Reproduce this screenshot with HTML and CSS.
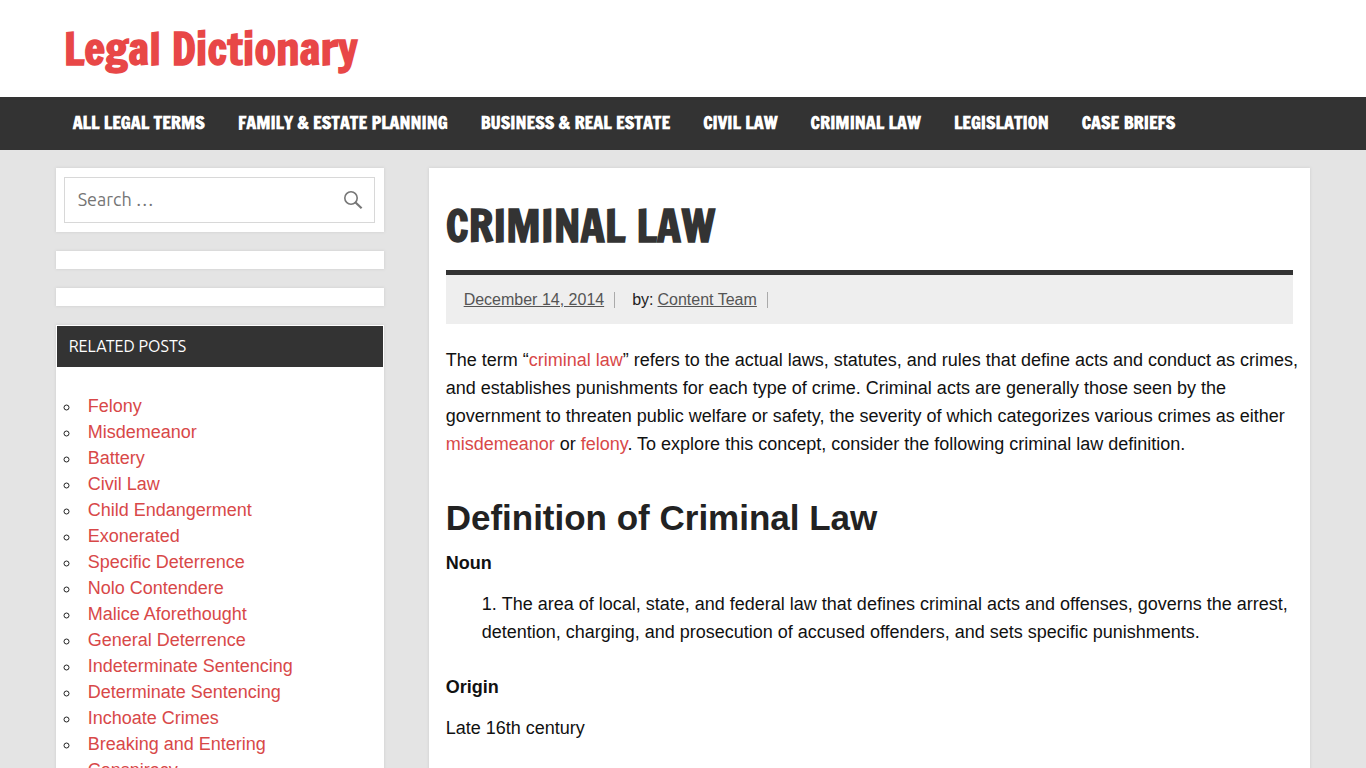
FILE: index.html
```html
<!DOCTYPE html>
<html lang="en-US">
<head>
  <meta charset="UTF-8">
  <meta name="viewport" content="width=device-width, initial-scale=1">
  <title>Criminal Law - Legal Dictionary</title>
  <link rel="stylesheet" href="styles.css">
</head>
<body>
  <header class="site-header">
    <div class="container">
      <p class="site-title"><a href="#">Legal Dictionary</a></p>
    </div>
  </header>

  <nav class="main-nav">
    <ul class="container menu">
      <li><a href="#">All Legal Terms</a></li>
      <li><a href="#">Family &amp; Estate Planning</a></li>
      <li><a href="#">Business &amp; Real Estate</a></li>
      <li><a href="#">Civil Law</a></li>
      <li><a href="#">Criminal Law</a></li>
      <li><a href="#">Legislation</a></li>
      <li><a href="#">Case Briefs</a></li>
    </ul>
  </nav>

  <div class="container wrap">
    <aside class="sidebar">
      <div class="widget widget-search">
        <form class="search-form" role="search">
          <input type="search" class="search-field" placeholder="Search …" aria-label="Search for:">
          <button type="submit" class="search-submit" aria-label="Search">
            <svg width="20" height="20" viewBox="0 0 20 20" fill="none" stroke="#777">
              <circle cx="8" cy="8" r="6.2" stroke-width="1.6"/>
              <path d="M12.3 12.3L18.6 18.2" stroke-width="2.2"/>
            </svg>
          </button>
        </form>
      </div>
      <div class="widget"></div>
      <div class="widget"></div>
      <div class="widget widget-related">
        <h3 class="widget-title">Related Posts</h3>
        <ul class="related">
          <li><a href="#">Felony</a></li>
          <li><a href="#">Misdemeanor</a></li>
          <li><a href="#">Battery</a></li>
          <li><a href="#">Civil Law</a></li>
          <li><a href="#">Child Endangerment</a></li>
          <li><a href="#">Exonerated</a></li>
          <li><a href="#">Specific Deterrence</a></li>
          <li><a href="#">Nolo Contendere</a></li>
          <li><a href="#">Malice Aforethought</a></li>
          <li><a href="#">General Deterrence</a></li>
          <li><a href="#">Indeterminate Sentencing</a></li>
          <li><a href="#">Determinate Sentencing</a></li>
          <li><a href="#">Inchoate Crimes</a></li>
          <li><a href="#">Breaking and Entering</a></li>
          <li><a href="#">Conspiracy</a></li>
        </ul>
      </div>
    </aside>

    <main class="content">
      <article>
        <h1 class="entry-title">Criminal Law</h1>
        <div class="entry-meta">
          <span class="meta-item"><a href="#">December 14, 2014</a></span>
          <span class="meta-item">by: <a href="#">Content Team</a></span>
        </div>
        <div class="entry">
          <p>The term “<a href="#">criminal law</a>” refers to the actual laws, statutes, and rules that define acts and conduct as crimes, and establishes punishments for each type of crime. Criminal acts are generally those seen by the government to threaten public welfare or safety, the severity of which categorizes various crimes as either <a href="#">misdemeanor</a> or <a href="#">felony</a>. To explore this concept, consider the following criminal law definition.</p>
          <h2>Definition of Criminal Law</h2>
          <p><strong>Noun</strong></p>
          <ol>
            <li>The area of local, state, and federal law that defines criminal acts and offenses, governs the arrest, detention, charging, and prosecution of accused offenders, and sets specific punishments.</li>
          </ol>
          <p><strong>Origin</strong></p>
          <p>Late 16th century</p>
        </div>
      </article>
    </main>
  </div>
</body>
</html>
```
FILE: styles.css
```css
* {
  box-sizing: border-box;
}
body {
  margin: 0;
  background: #e4e4e4;
  color: #222;
  font-family: Arial, "Liberation Sans", sans-serif;
  font-size: 18px;
  line-height: 28px;
}
a {
  color: #d84848;
  text-decoration: none;
}
.container {
  width: 92%;
  margin: 0 auto;
}

/* header */
.site-header {
  background: #fff;
}
.site-title {
  margin: 0;
  padding: 16px 9px 17px;
  font-family: "Francois One", "Liberation Sans Narrow", "Arial Narrow", sans-serif;
  font-size: 44px;
  font-weight: bold;
  line-height: 64px;
}
.site-title a {
  color: #e84747;
}

/* navigation */
.main-nav {
  background: #333;
}
.menu {
  display: flex;
  gap: 33px;
  padding: 0 18px;
  list-style: none;
}
.menu a {
  display: block;
  padding: 11px 0 14px;
  color: #fff;
  font-family: "Francois One", "Liberation Sans Narrow", "Arial Narrow", sans-serif;
  font-weight: bold;
  text-transform: uppercase;
}

/* layout */
.wrap {
  display: flex;
  gap: 45px;
  padding: 18px 1px 0;
}
.sidebar {
  flex: 0 0 328px;
}
.content {
  flex: 1;
  min-width: 0;
  padding: 26px 17px 40px;
  background: #fff;
  box-shadow: 0 0 3px #ccc;
}

/* widgets */
.widget {
  min-height: 18px;
  margin-bottom: 19px;
  background: #fff;
  box-shadow: 0 0 3px #ccc;
}
.widget-search {
  padding: 9px 9px 9px 8px;
}
.search-form {
  display: flex;
  height: 46px;
  border: 1px solid #d8d8d8;
}
.search-field {
  flex: 1;
  min-width: 0;
  padding: 0 13px 2px;
  border: 0;
  background: none;
  font-family: Ubuntu, "Noto Sans", sans-serif;
  font-size: 18px;
}
.search-field::placeholder {
  color: #757575;
}
.search-submit {
  padding: 2px 11px 0 0;
  border: 0;
  background: none;
  cursor: pointer;
}
.widget-related {
  padding: 1px;
}
.widget-title {
  margin: 0;
  padding: 6px 12px 7px;
  background: #333;
  color: #fff;
  font-family: Ubuntu, "Noto Sans", sans-serif;
  font-size: 16px;
  font-weight: normal;
  text-transform: uppercase;
}
.related {
  margin: 0;
  padding: 26px 0 18px 24px;
  list-style: circle;
  line-height: 26px;
}
.related li {
  padding-left: 7px;
}

/* article */
.entry-title {
  margin: 0;
  padding-bottom: 13px;
  border-bottom: 5px solid #333;
  color: #333;
  font-family: "Francois One", "Liberation Sans Narrow", "Arial Narrow", sans-serif;
  font-size: 44px;
  line-height: 63px;
  text-transform: uppercase;
}
.entry-meta {
  display: flex;
  padding: 11px 18px 10px;
  background: #eee;
  font-size: 16px;
}
.entry-meta a {
  color: #555;
  text-decoration: underline;
}
.meta-item {
  display: flex;
  align-items: center;
  gap: 4px;
  margin-right: 17px;
}
.meta-item::after {
  content: "";
  height: 16px;
  margin-left: 6px;
  border-right: 1px solid #aaa;
}
.entry {
  margin-right: -10px;
  padding-top: 22px;
  color: #111;
}
.entry p {
  margin: 0 0 13px;
}
.entry h2 {
  margin: 39px 0 10px;
  color: #222;
  font-size: 35px;
  line-height: 42px;
}
.entry ol {
  margin: 0 0 27px;
  padding-left: 36px;
  list-style-position: inside;
}
```
